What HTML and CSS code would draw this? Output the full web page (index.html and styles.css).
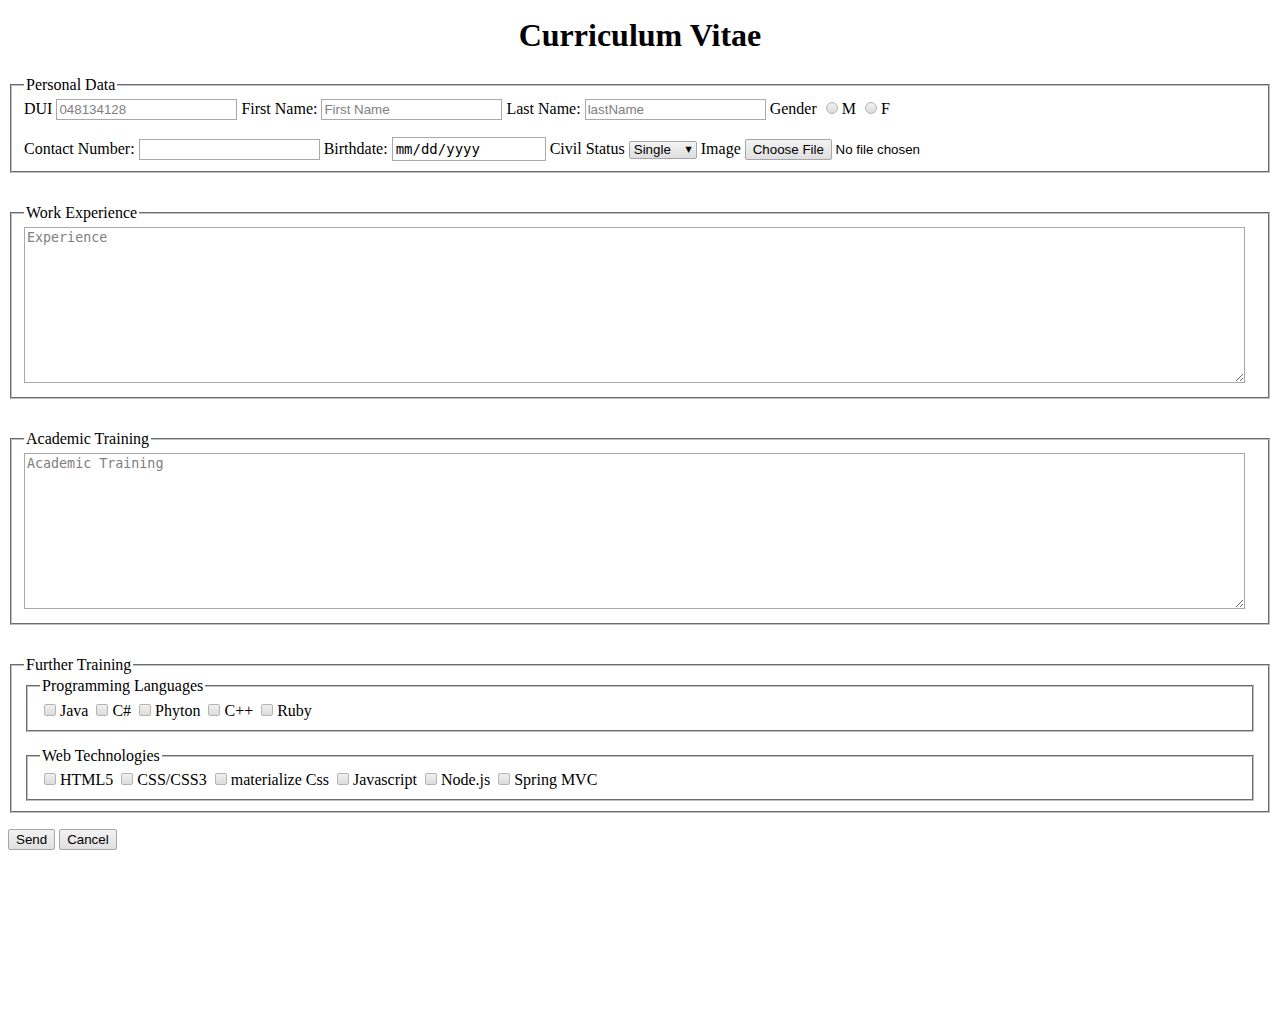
FILE: index.html
```html
<!DOCTYPE html>
<html>
<head>
<meta charset="utf-8">
<title>Curriculum Vitae</title>
<link rel="stylesheet" href="styles.css">
</head>
<body>
<h1 class="title">Curriculum Vitae</h1>
<form class="cv">
  <fieldset class="box">
    <legend>Personal Data</legend>
    <div class="row">
      <label>DUI <input class="txt" type="text" placeholder="048134128"></label>
      <label>First Name: <input class="txt" type="text" placeholder="First Name"></label>
      <label>Last Name: <input class="txt" type="text" placeholder="lastName"></label>
      <span>Gender <input class="radio" type="radio" name="g">M <input class="radio" type="radio" name="g">F</span>
    </div>
    <div class="row">
      <label>Contact Number: <input class="txt" type="text"></label>
      <label>Birthdate: <input class="date" type="text" value="mm/dd/yyyy"></label>
      <label>Civil Status <span class="selwrap"><select class="sel"><option>Single</option><option>Married</option></select></span></label>
      <label>Image <span class="file"><button type="button" class="btn">Choose File</button> No file chosen</span></label>
    </div>
  </fieldset>
  <fieldset class="box">
    <legend>Work Experience</legend>
    <textarea class="area" placeholder="Experience"></textarea>
  </fieldset>
  <fieldset class="box">
    <legend>Academic Training</legend>
    <textarea class="area" placeholder="Academic Training"></textarea>
  </fieldset>
  <fieldset class="box outer">
    <legend>Further Training</legend>
    <fieldset class="box sub">
      <legend>Programming Languages</legend>
      <label><input class="check" type="checkbox">Java</label>
      <label><input class="check" type="checkbox">C#</label>
      <label><input class="check" type="checkbox">Phyton</label>
      <label><input class="check" type="checkbox">C++</label>
      <label><input class="check" type="checkbox">Ruby</label>
    </fieldset>
    <fieldset class="box sub">
      <legend>Web Technologies</legend>
      <label><input class="check" type="checkbox">HTML5</label>
      <label><input class="check" type="checkbox">CSS/CSS3</label>
      <label><input class="check" type="checkbox">materialize Css</label>
      <label><input class="check" type="checkbox">Javascript</label>
      <label><input class="check" type="checkbox">Node.js</label>
      <label><input class="check" type="checkbox">Spring MVC</label>
    </fieldset>
  </fieldset>
  <div class="actions">
    <button type="submit" class="btn">Send</button>
    <button type="reset" class="btn">Cancel</button>
  </div>
</form>
</body>
</html>
```
FILE: styles.css
```css
body {
  margin: 8px;
  font-family: "Liberation Serif", "Times New Roman", serif;
  font-size: 16px;
  color: #000;
  background: #fff;
}
.title {
  text-align: center;
  font-size: 32px;
  margin: 9px 0 22px;
}
.box {
  margin: 0 2px 31px;
  border: 2px groove #c0c0c0;
  padding: 5px 12px 10px;
}
.box legend {
  padding: 0 2px;
}
.row {
  line-height: 20px;
}
.row + .row {
  margin-top: 17px;
}
.txt, .date {
  font-family: "Liberation Sans", Arial, sans-serif;
  font-size: 13.33px;
  border: 1px solid #a9a9a9;
  padding: 1px 2px;
  width: 181px;
  height: 21px;
  box-sizing: border-box;
  margin: 0;
}
.txt::placeholder, .area::placeholder {
  color: #808080;
}
.date {
  font-family: "DejaVu Sans Mono", monospace;
  font-size: 14px;
  width: 154px;
  height: 24px;
  padding: 1px 3px;
}
.selwrap {
  position: relative;
  display: inline-block;
}
.selwrap::after {
  content: "\25BC";
  position: absolute;
  right: 5px;
  top: 1px;
  font-family: "DejaVu Sans", sans-serif;
  font-size: 8px;
  pointer-events: none;
}
.sel {
  appearance: none;
  -webkit-appearance: none;
  font-family: "Liberation Sans", Arial, sans-serif;
  font-size: 13.33px;
  height: 18px;
  width: 68px;
  border: 1px solid #a6a6a6;
  border-radius: 2px;
  background: linear-gradient(#f4f4f4, #dedede);
  padding: 0 4px;
  margin: 0;
  color: #000;
}
.file {
  font-family: "Liberation Sans", Arial, sans-serif;
  font-size: 13.33px;
}
.btn {
  font-family: "Liberation Sans", Arial, sans-serif;
  font-size: 13.33px;
  background: linear-gradient(#f2f2f2, #e0e0e0);
  border: 1px solid #a6a6a6;
  border-radius: 2px;
  padding: 2px 7px;
  height: 21px;
  margin: 0;
  color: #000;
}
.area {
  width: 1221px;
  height: 156px;
  box-sizing: border-box;
  border: 1px solid #a9a9a9;
  font-family: "DejaVu Sans Mono", monospace;
  font-size: 13.33px;
  padding: 2px;
  margin: 0;
  vertical-align: baseline;
}
.outer {
  margin-bottom: 0;
  padding-top: 3px;
}
.sub {
  margin-bottom: 15px;
  padding: 6px 12px 10px;
}
.sub:last-child {
  margin-bottom: 0;
  padding-top: 5px;
}
.actions {
  margin-top: 16px;
}
.check, .radio {
  appearance: none;
  -webkit-appearance: none;
  width: 12px;
  height: 12px;
  border: 1px solid #b4b4b4;
  background: linear-gradient(#f0f0f0, #dcdcdc);
  box-sizing: border-box;
  vertical-align: baseline;
}
.check {
  border-radius: 2px;
  margin: 3px 4px 0 4px;
}
.radio {
  border-radius: 50%;
  margin: 3px 4px 0 5px;
}
```
